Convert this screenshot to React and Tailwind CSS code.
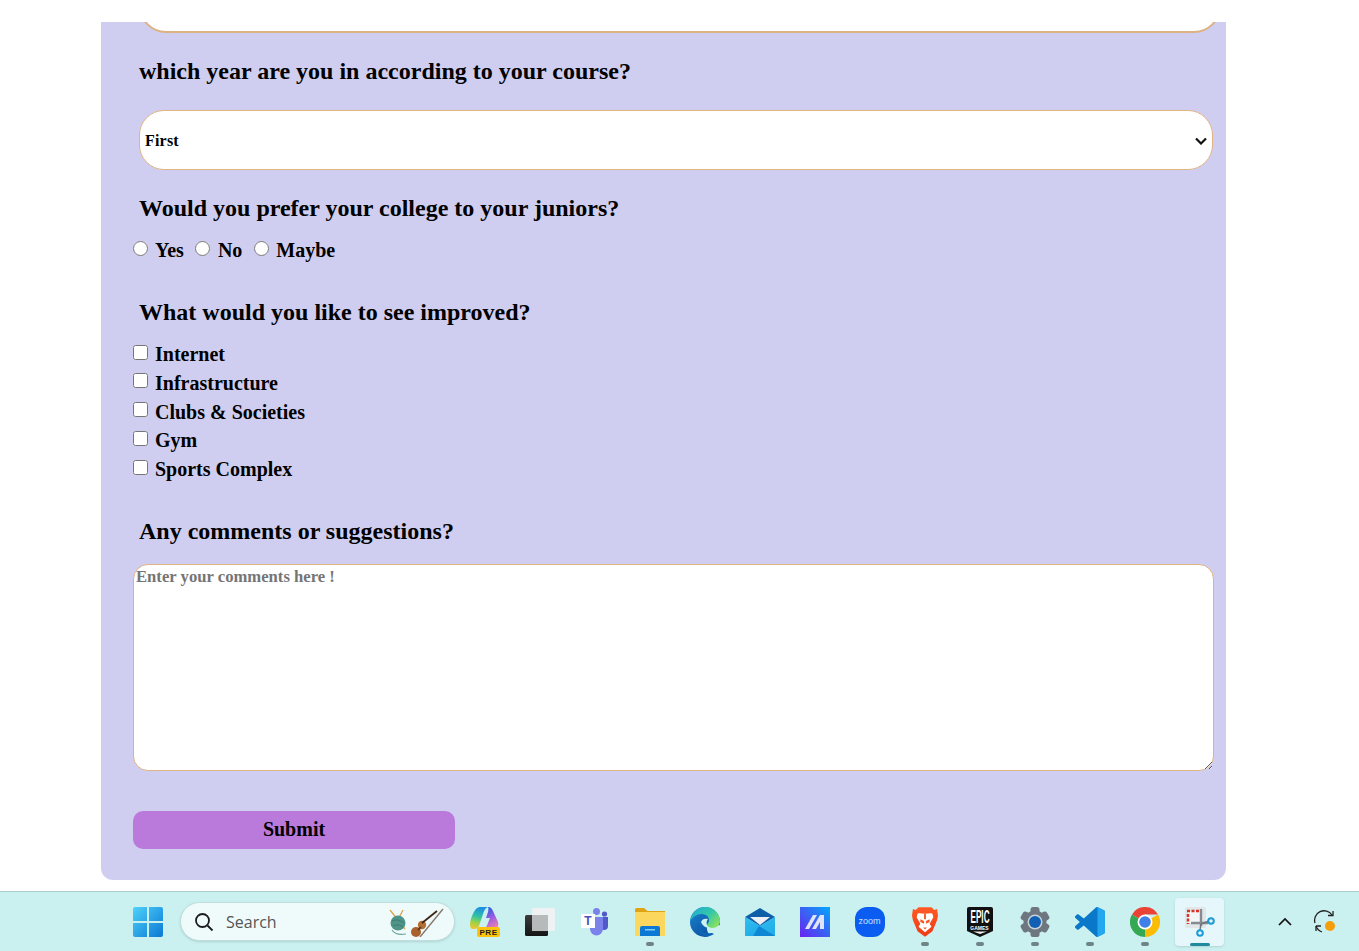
import React from "react";

const serif = "font-['Liberation_Serif',serif]";

const improvements = ["Internet", "Infrastructure", "Clubs & Societies", "Gym", "Sports Complex"];

function Heading({ className, children }) {
  return <h2 className={`ml-[6px] h-[30px] text-[24px] leading-[30px] font-bold ${className}`}>{children}</h2>;
}

function Dot({ active }) {
  if (active) return <span className="absolute bottom-[6px] left-1/2 h-[3px] w-[20px] -translate-x-1/2 rounded-full bg-[#1f8a9e]" />;
  return <span className="absolute bottom-[6px] left-1/2 h-[4px] w-[8px] -translate-x-1/2 rounded-full bg-[#6f8486]" />;
}

function TaskIcon({ children, dot, active }) {
  return (
    <div className={`relative flex h-[60px] w-[55px] shrink-0 items-center justify-center`}>
      {active && <span className="absolute top-[6px] left-[3px] h-[48px] w-[49px] rounded-[4px] bg-[#e6f7fb] shadow-sm" />}
      <div className="relative flex">{children}</div>
      {dot && <Dot active={active} />}
    </div>
  );
}

function WindowsLogo() {
  return (
    <svg width="30" height="30" viewBox="0 0 30 30">
      <defs>
        <linearGradient id="win" x1="0" y1="0" x2="1" y2="1">
          <stop offset="0" stopColor="#4fd2fb" />
          <stop offset="1" stopColor="#0a78d4" />
        </linearGradient>
      </defs>
      <path fill="url(#win)" d="M2 0h12v14H0V2a2 2 0 0 1 2-2zM16 0h12a2 2 0 0 1 2 2v12H16zM0 16h14v14H2a2 2 0 0 1-2-2zM16 16h14v12a2 2 0 0 1-2 2H16z" />
    </svg>
  );
}

function SearchDoodle() {
  return (
    <svg width="58" height="30" viewBox="0 0 58 30">
      <path d="M3 3l15 19M16 3L7 20" stroke="#e0a458" strokeWidth="1.400" />
      <circle cx="11" cy="16" r="7.500" fill="#4f9488" />
      <path d="M5 14c4-2 8-1 12 2M6 19c4-2 7-1 10 1" stroke="#3a7a70" strokeWidth="1" fill="none" />
      <path d="M5 23c3 5 8 5 14 4" stroke="#6ca89e" strokeWidth="1.200" fill="none" />
      <circle cx="29" cy="25" r="5" fill="#a9622c" />
      <circle cx="35" cy="18" r="4.200" fill="#b56f34" />
      <path d="M31 23l3-3" stroke="#6b3a18" strokeWidth="2" />
      <path d="M35 16L50 4" stroke="#3d2616" strokeWidth="1.800" />
      <path d="M33 30L56 2" stroke="#85776d" strokeWidth="1.400" />
    </svg>
  );
}

function Copilot() {
  return (
    <svg width="30" height="30" viewBox="0 0 30 30">
      <defs>
        <linearGradient id="cpa" x1="0.500" y1="0" x2="0.300" y2="1">
          <stop offset="0" stopColor="#1a8fe3" />
          <stop offset="0.450" stopColor="#34c4a0" />
          <stop offset="0.700" stopColor="#96d24a" />
          <stop offset="1" stopColor="#f2c430" />
        </linearGradient>
        <linearGradient id="cpb" x1="0.300" y1="0" x2="0.700" y2="1">
          <stop offset="0" stopColor="#1f5fdf" />
          <stop offset="0.500" stopColor="#9a5ce0" />
          <stop offset="1" stopColor="#f080b0" />
        </linearGradient>
      </defs>
      <path fill="url(#cpa)" d="M10 0h8c-3 1-4 4-5 7L9 19c-1 2-3 3-5 3H3c-2 0-3-2-3-4C0 12 4 4 6 2c1-1 2-2 4-2z" />
      <path fill="url(#cpb)" d="M18 0c3 0 4 2 5 4l5 11c1 3 0 7-4 7H13c3-1 4-3 5-6l2-5h-4l2-6c1-3 0-5 0-5z" />
      <rect x="7" y="20" width="23" height="10" rx="2" fill="#fdc30a" />
      <text x="18.500" y="28" textAnchor="middle" className="font-['Liberation_Sans',sans-serif]" fontSize="8" fontWeight="700" letterSpacing="0.500" fill="#222">PRE</text>
    </svg>
  );
}

function Squares() {
  return (
    <svg width="30" height="30" viewBox="0 0 30 30">
      <defs>
        <linearGradient id="sqA" x1="0" y1="0" x2="0" y2="1">
          <stop offset="0" stopColor="#3c3c3c" />
          <stop offset="1" stopColor="#151515" />
        </linearGradient>
      </defs>
      <rect x="0" y="8" width="23" height="21" rx="1.500" fill="url(#sqA)" />
      <rect x="7" y="1" width="23" height="23" rx="1" fill="#eef2f2" />
      <rect x="7" y="8" width="16" height="16" fill="#b7baba" />
    </svg>
  );
}

function Teams() {
  return (
    <svg width="28" height="28" viewBox="0 0 28 28">
      <circle cx="15.500" cy="3.500" r="3.500" fill="#7b83eb" />
      <circle cx="23.500" cy="6" r="2.600" fill="#5059c9" />
      <path d="M19 9h8v9a4 4 0 0 1-8 0z" fill="#5059c9" />
      <path d="M9 9h13v12a6.500 6.500 0 0 1-13 0z" fill="#7b83eb" />
      <rect x="0" y="6" width="14" height="14" fill="#fff" />
      <text x="7" y="17" textAnchor="middle" className="font-['Liberation_Sans',sans-serif]" fontSize="12" fontWeight="700" fill="#4b53bc">T</text>
    </svg>
  );
}

function Folder() {
  return (
    <svg width="30" height="28" viewBox="0 0 30 28">
      <path d="M0 1.500A1.500 1.500 0 0 1 1.500 0h7.500l3.500 3H30v3H0z" fill="#e0a412" />
      <path d="M0 4h30v24H0z" fill="#fbd75d" />
      <path d="M5 20a2 2 0 0 1 2-2h16a2 2 0 0 1 2 2v8H5z" fill="#0a78d4" />
      <rect x="10" y="21" width="10" height="1.500" fill="#7fd0f5" />
    </svg>
  );
}

function Edge() {
  return (
    <svg width="30" height="30" viewBox="0 0 30 30">
      <defs>
        <linearGradient id="edgeA" x1="0" y1="0" x2="1" y2="0.700">
          <stop offset="0" stopColor="#1fa8d8" />
          <stop offset="0.600" stopColor="#34c8a8" />
          <stop offset="1" stopColor="#86e060" />
        </linearGradient>
        <linearGradient id="edgeB" x1="0" y1="0" x2="0.800" y2="1">
          <stop offset="0" stopColor="#1a86d0" />
          <stop offset="1" stopColor="#0b4a9c" />
        </linearGradient>
      </defs>
      <circle cx="15" cy="15" r="15" fill="url(#edgeB)" />
      <path fill="#caf1f0" d="M19 30l11-3v-9l-12 2c-3 1 1 6 1 10z" />
      <path fill="url(#edgeA)" d="M0 14C2 5 8 0 15 0c9 0 15 7 15 14 0 4-3 7-8 7-3 0-5-1-5-3 0-1 2-2 2-5 0-4-4-6-8-6C7 7 3 10 0 14z" />
      <path fill="#caf1f0" d="M11 15c1-3 4-4 7-3-1 1-2 3-1 6 1 2 3 3 5 3-4 1-9-1-11-6z" />
      <path fill="#0e63b5" d="M9 17c0 6 6 10 13 9l2 1c-3 2-7 3-10 2-5-2-7-7-5-12z" />
    </svg>
  );
}

function Mail() {
  return (
    <svg width="30" height="28" viewBox="0 0 30 28">
      <defs>
        <linearGradient id="mailA" x1="0" y1="0" x2="1" y2="1">
          <stop offset="0" stopColor="#2fc0f2" />
          <stop offset="1" stopColor="#1a9fe2" />
        </linearGradient>
      </defs>
      <path d="M0 9L15 0l15 9-15 9z" fill="#0e5fa8" />
      <path d="M5 9h20l-10 8z" fill="#eef1f4" />
      <path d="M0 9l15 9 15-9v19H0z" fill="url(#mailA)" />
      <path d="M15 18l15 10V9z" fill="#38c8f6" opacity="0.300" />
      <path d="M14 18l16 10H8z" fill="#0f86d4" />
    </svg>
  );
}

function MaxLogo() {
  return (
    <svg width="30" height="30" viewBox="0 0 30 30">
      <defs>
        <linearGradient id="maxA" x1="0" y1="1" x2="1" y2="0">
          <stop offset="0" stopColor="#6a22f0" />
          <stop offset="0.600" stopColor="#2f6ff5" />
          <stop offset="1" stopColor="#00aaff" />
        </linearGradient>
      </defs>
      <rect width="30" height="30" fill="url(#maxA)" />
      <path d="M5 22L13 8h4L9 22zM12 22l8-14h4v14h-4v-7l-4 7z" fill="#dfe4fb" />
    </svg>
  );
}

function Zoom() {
  return (
    <div className="flex h-[30px] w-[30px] items-center justify-center rounded-[12px] bg-[#0b5cf0]">
      <span className="font-['Liberation_Sans',sans-serif] text-[9px] leading-none text-[#cfe0ff]">zoom</span>
    </div>
  );
}

function Brave() {
  return (
    <svg width="26" height="30" viewBox="0 0 28 32">
      <defs>
        <linearGradient id="braveA" x1="0" y1="0" x2="0" y2="1">
          <stop offset="0" stopColor="#ff5a24" />
          <stop offset="1" stopColor="#ee3a14" />
        </linearGradient>
      </defs>
      <path d="M7 0h14l3 3 3-1 1 7-1 5-5 12-8 6-8-6L1 14 0 9l1-7 3 1z" fill="url(#braveA)" />
      <path d="M14 7c3 0 6-1 8 0l1 4-4 7 2 3-7 6-7-6 2-3-4-7 1-4c2-1 5 0 8 0z" fill="#fff" />
      <path d="M9 13l4 2v3l-4-2zM19 13l-4 2v3l4-2zM12 22h4l-2 2zM13 7h2v6h-2z" fill="#f15a22" />
    </svg>
  );
}

function Epic() {
  return (
    <div className="relative">
      <svg width="26" height="30" viewBox="0 0 26 30">
        <path d="M2 0h22a2 2 0 0 1 2 2v22l-13 6L0 24V2a2 2 0 0 1 2-2z" fill="#111" />
        <path d="M6 24.500h14L13 27z" fill="#eee" />
      </svg>
      <span className="absolute top-[2px] left-0 flex h-[15px] w-[26px] scale-x-[0.43] justify-center font-['Liberation_Sans',sans-serif] text-[19px] leading-[15px] font-bold text-white">EPIC</span>
      <span className="absolute top-[18px] left-0 w-[26px] text-center font-['Liberation_Sans',sans-serif] text-[5px] leading-[6px] font-bold text-white">GAMES</span>
    </div>
  );
}

function Gear() {
  return (
    <svg width="30" height="30" viewBox="0 0 30 30">
      <g fill="#6e7780">
        <circle cx="15" cy="15" r="11.500" />
        <rect x="10.500" y="0" width="9" height="30" rx="2.500" />
        <rect x="10.500" y="0" width="9" height="30" rx="2.500" transform="rotate(60 15 15)" />
        <rect x="10.500" y="0" width="9" height="30" rx="2.500" transform="rotate(120 15 15)" />
      </g>
      <circle cx="15" cy="15" r="7.500" fill="#c6d3da" />
      <circle cx="15" cy="15" r="6" fill="#1260b4" />
    </svg>
  );
}

function VSCode() {
  return (
    <svg width="30" height="30" viewBox="0 0 100 100">
      <path fill="#0a78c8" d="M70.900 99.300a6.200 6.200 0 0 0 4.900-.2l20.600-9.900a6.200 6.200 0 0 0 3.500-5.600V16.400a6.200 6.200 0 0 0-3.500-5.600L75.800.9a6.200 6.200 0 0 0-7.100 1.200L29.300 38.100 12.100 25c-1.600-1.200-3.800-1.100-5.300.3l-5.500 5c-1.800 1.600-1.800 4.500 0 6.100L16.200 50 1.300 63.600c-1.800 1.600-1.800 4.500 0 6.100l5.500 5c1.500 1.400 3.700 1.500 5.300.3l17.200-13.100 39.400 36a6.200 6.200 0 0 0 2.200 1.400zM75 27.300 45.100 50 75 72.700z" />
      <path fill="#23a8f0" d="M75 .3l1 .4 20.400 10.100a6.200 6.200 0 0 1 3.600 5.600v67.200a6.200 6.200 0 0 1-3.600 5.600L76 99.300l-1 .4z" />
    </svg>
  );
}

function Chrome() {
  return (
    <svg width="30" height="30" viewBox="0 0 30 30">
      <path d="M15 15L2 7.500A15 15 0 0 1 28 7.500H15z" fill="#ea4335" />
      <path d="M15 15L28 7.500A15 15 0 0 1 15 30z" fill="#fbbc04" />
      <path d="M15 15v15A15 15 0 0 1 2 7.500z" fill="#34a853" />
      <circle cx="15" cy="15" r="7.500" fill="#fff" />
      <circle cx="15" cy="15" r="5.800" fill="#3f7fe8" />
    </svg>
  );
}

function Snip() {
  return (
    <svg width="30" height="32" viewBox="0 0 30 32">
      <rect x="0" y="1" width="21" height="21" rx="1.500" fill="#e1e6e9" />
      <rect x="3" y="5" width="13" height="12" fill="#f4f7f8" />
      <path d="M2 5h14" stroke="#d8352a" strokeWidth="2.500" strokeDasharray="3 1.500" fill="none" />
      <path d="M3 8v10" stroke="#d8352a" strokeWidth="2.500" strokeDasharray="3 1.500" fill="none" />
      <path d="M16 3v17M6 17h17" stroke="#858b90" strokeWidth="2.400" fill="none" />
      <path d="M16 18l8-3M16 18l-1 6" stroke="#6f757a" strokeWidth="1.500" fill="none" />
      <circle cx="26" cy="15" r="2.800" fill="#e6f7fb" stroke="#1a9ad6" strokeWidth="2" />
      <circle cx="15" cy="27" r="2.800" fill="#e6f7fb" stroke="#1a9ad6" strokeWidth="2" />
    </svg>
  );
}

function SyncBadge() {
  return (
    <svg width="24" height="24" viewBox="0 0 24 24" fill="none" stroke="#222" strokeWidth="1.300">
      <path d="M2 13a9.500 9.500 0 0 1 17-8" />
      <path d="M20 1v4.500h-5" />
      <path d="M3 16h5M3 16v5" />
      <path d="M3 16a10 10 0 0 0 6 6" />
      <circle cx="17" cy="16" r="5" fill="#f59e0b" stroke="none" />
    </svg>
  );
}

function Taskbar() {
  return (
    <footer className="flex h-[60px] shrink-0 items-center border-t border-[#a9cbcb] bg-[#caf1f0] pl-[120px]">
      <TaskIcon><WindowsLogo /></TaskIcon>
      <div className="ml-[5px] flex h-[39px] w-[275px] shrink-0 items-center rounded-full border border-[#c0dede] bg-[#effbfb] pr-[9px] pl-[13px] shadow-sm">
        <svg width="20" height="20" viewBox="0 0 20 20" fill="none" stroke="#1c1c1c" strokeWidth="1.800">
          <circle cx="8.500" cy="8.500" r="6.500" />
          <path d="M13.500 13.500L18.500 18.500" />
        </svg>
        <span className="ml-[12px] font-['Open_Sans',sans-serif] text-[16px] text-[#555]">Search</span>
        <div className="ml-auto flex"><SearchDoodle /></div>
      </div>
      <div className="ml-[2px] flex">
        <TaskIcon><Copilot /></TaskIcon>
        <TaskIcon><Squares /></TaskIcon>
        <TaskIcon><Teams /></TaskIcon>
        <TaskIcon dot><Folder /></TaskIcon>
        <TaskIcon><Edge /></TaskIcon>
        <TaskIcon><Mail /></TaskIcon>
        <TaskIcon><MaxLogo /></TaskIcon>
        <TaskIcon><Zoom /></TaskIcon>
        <TaskIcon dot><Brave /></TaskIcon>
        <TaskIcon dot><Epic /></TaskIcon>
        <TaskIcon dot><Gear /></TaskIcon>
        <TaskIcon dot><VSCode /></TaskIcon>
        <TaskIcon dot><Chrome /></TaskIcon>
        <TaskIcon dot active><Snip /></TaskIcon>
      </div>
      <svg className="ml-[51px]" width="14" height="9" viewBox="0 0 14 9" fill="none" stroke="#111" strokeWidth="1.700">
        <path d="M1 8l6-6 6 6" />
      </svg>
      <div className="ml-[21px] flex"><SyncBadge /></div>
    </footer>
  );
}

export default function App() {
  return (
    <div className={`flex h-[951px] flex-col overflow-hidden bg-white text-black ${serif}`}>
      <main className="flex-1 pt-[22px] pl-[101px]">
        {/* Survey card */}
        <form className="flex h-[858px] w-[1125px] flex-col overflow-hidden rounded-b-[12px] bg-[#d0cef0] pr-[12px] pl-[32px]">
          <div className="mt-[-50px] ml-[6px] h-[61px] w-[1082px] shrink-0 rounded-[27px] border-2 border-[#dcb280] bg-white" />

          <Heading className="mt-[23px]">which year are you in according to your course?</Heading>
          <div className="relative mt-[24px] ml-[6px] h-[60px] w-[1074px] shrink-0">
            <select className="h-full w-full appearance-none rounded-[25px] border border-[#e0b383] bg-white pt-[2px] pl-[5px] text-[16px] font-bold tracking-[0.2px]">
              <option>First</option>
            </select>
            <svg className="pointer-events-none absolute top-[27px] right-[6px]" width="12" height="8" viewBox="0 0 12 8" fill="none" stroke="#111" strokeWidth="2.200">
              <path d="M1 1.500l5 5 5-5" />
            </svg>
          </div>

          <Heading className="mt-[23px]">Would you prefer your college to your juniors?</Heading>
          <div className="mt-[15px] flex h-[24px] items-center text-[20px] leading-[24px] font-bold">
            <input type="radio" name="prefer" className="mb-[4px] h-[15px] w-[15px]" />
            <label className="ml-[7px]">Yes</label>
            <input type="radio" name="prefer" className="mb-[4px] ml-[11px] h-[15px] w-[15px]" />
            <label className="ml-[8px]">No</label>
            <input type="radio" name="prefer" className="mb-[4px] ml-[12px] h-[15px] w-[15px]" />
            <label className="ml-[7px]">Maybe</label>
          </div>

          <Heading className="mt-[35px]">What would you like to see improved?</Heading>
          <div className="mt-[12.700px] flex flex-col">
            {improvements.map((item) => (
              <div key={item} className="flex h-[28.750px] items-center text-[20px] font-bold">
                <input type="checkbox" className="mb-[4px] h-[15px] w-[15px]" />
                <label className="ml-[7px]">{item}</label>
              </div>
            ))}
          </div>

          <Heading className="mt-[32.300px]">Any comments or suggestions?</Heading>
          <textarea
            placeholder="Enter your comments here !"
            className="mt-[18px] h-[207px] w-[1081px] shrink-0 rounded-[15px] border border-[#e0b383] bg-white px-[2px] pt-[1px] text-[16.670px] leading-[22px] font-bold placeholder:text-[#757575]"
          />

          <button type="button" className="mt-[40px] h-[38px] w-[322px] shrink-0 rounded-[10px] bg-[#b97adb] pb-[1px] text-[20px] font-bold">
            Submit
          </button>
        </form>
      </main>
      <Taskbar />
    </div>
  );
}
